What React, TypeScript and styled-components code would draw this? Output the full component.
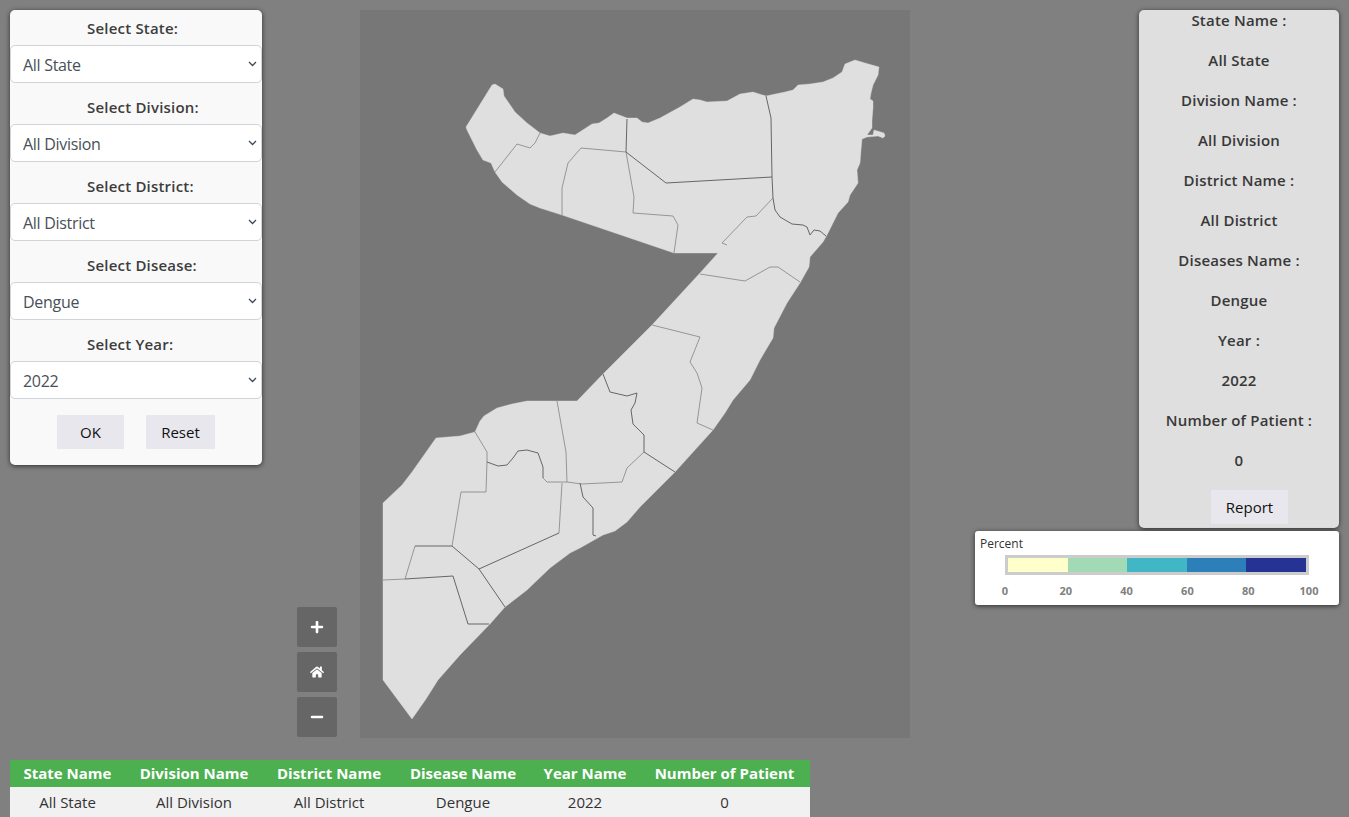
import React from "react";
import styled, { createGlobalStyle } from "styled-components";
import { FaHome, FaMinus, FaPlus } from "react-icons/fa";

const Global = createGlobalStyle`
  html, body { margin: 0; height: 817px; overflow: hidden; background: #808080; }
  body { font-family: "Open Sans", "Liberation Sans", sans-serif; }
  * { box-sizing: border-box; }
`;

const Page = styled.div`
  padding: 10px;
  height: 817px;
  overflow: hidden;
`;
const Top = styled.div`
  display: grid;
  grid-template-columns: 252px 1fr 364px;
  height: 728px;
`;
const FilterPanel = styled.form`
  height: 455px;
  background: #f9f9fa;
  border-radius: 5px;
  box-shadow: 0 1px 5px rgba(0, 0, 0, 0.65);
  display: flex;
  flex-direction: column;
`;
const FieldLabel = styled.label`
  display: block;
  height: 35px;
  padding: 8px 0 0 77px;
  font-size: 15px;
  line-height: 20px;
  font-weight: 600;
  letter-spacing: 0.2px;
  color: #3d3d3d;
`;
const Field = styled.div`
  height: 79px;
`;
const SelectWrap = styled.div`
  position: relative;
  height: 38px;
`;
const Select = styled.select`
  display: block;
  width: 100%;
  height: 38px;
  padding: 2px 24px 0 12px;
  appearance: none;
  font-family: inherit;
  font-size: 16px;
  letter-spacing: -0.3px;
  color: #495057;
  background: #fff;
  border: 1px solid #ced4da;
  border-radius: 5px;
`;
const Chevron = styled.svg`
  position: absolute;
  right: 5px;
  top: 16px;
  width: 9px;
  height: 6px;
  pointer-events: none;
`;
const Actions = styled.div`
  display: flex;
  margin-top: 10px;
  padding-left: 47px;
  gap: 22px;
`;
const Button = styled.button<{ $w: number }>`
  width: ${(p) => p.$w}px;
  height: 34px;
  padding: 0;
  border: 0;
  background: #e7e7ed;
  color: #111;
  font-family: inherit;
  font-size: 15px;
`;
const Stage = styled.div`
  display: flex;
  align-items: flex-end;
  gap: 23px;
  padding-left: 35px;
`;
const Zoom = styled.div`
  display: flex;
  flex-direction: column;
  gap: 5px;
  margin-bottom: 1px;
`;
const ZoomButton = styled.div`
  width: 40px;
  height: 40px;
  background: #666;
  border-radius: 2px;
  color: #fff;
  display: flex;
  align-items: center;
  justify-content: center;
  padding: 0 1px 1px 0;
  font-size: 14px;
`;
const MapBox = styled.svg`
  display: block;
  width: 550px;
  height: 728px;
  background: #777;
`;
const Side = styled.div`
  display: flex;
  flex-direction: column;
  align-items: flex-end;
  gap: 3px;
`;
const InfoPanel = styled.div`
  width: 200px;
  height: 518px;
  background: #dfdfdf;
  border-radius: 5px;
  box-shadow: 0 1px 5px rgba(0, 0, 0, 0.65);
  text-align: center;
`;
const InfoLine = styled.div`
  height: 40px;
  font-size: 15px;
  line-height: 20px;
  font-weight: 600;
  letter-spacing: 0.2px;
  color: #383838;
`;
const ReportRow = styled.div`
  display: flex;
  padding-left: 72px;
`;
const Legend = styled.div`
  width: 364px;
  height: 74px;
  background: #fff;
  border-radius: 3px;
  box-shadow: 0 1px 5px rgba(0, 0, 0, 0.65);
  padding: 6px 0 0 5px;
`;
const LegendTitle = styled.div`
  font-size: 12px;
  line-height: 14px;
  color: #333;
`;
const Ramp = styled.div`
  display: flex;
  width: 304px;
  height: 20px;
  margin: 4px 0 0 25px;
  border: 3px solid #ccc;
`;
const Swatch = styled.div<{ $c: string }>`
  flex: 1;
  background: ${(p) => p.$c};
`;
const Ticks = styled.div`
  display: flex;
  justify-content: space-between;
  width: 304px;
  margin: 8px 0 0 25px;
`;
const Tick = styled.span`
  width: 0;
  display: flex;
  justify-content: center;
  font-size: 11px;
  line-height: 15px;
  font-weight: 700;
  color: #808080;
`;
const Table = styled.table`
  margin-top: 22px;
  width: 800px;
  border-collapse: collapse;
  table-layout: fixed;
  text-align: center;
`;
const Th = styled.th<{ $w: number }>`
  width: ${(p) => p.$w}px;
  height: 27px;
  padding: 0 0 2px;
  background: #4caf50;
  color: #fff;
  font-size: 15px;
  font-weight: 700;
`;
const Td = styled.td`
  height: 30px;
  padding: 0;
  background: #f1f1f1;
  color: #333;
  font-size: 15px;
  border-bottom: 1px solid #ddd;
`;

const outline =
  "M466 127L479 106L492 85L495 84L503 89L504 96L515 112L527 123L540 133L550 136L563 133L575 135L592 124L599 123L607 118L614 113L627 118L637 118L642 122L648 123L660 118L680 107L693 99L700 100L707 102L727 101L740 94L753 92L766 96L785 92L793 90L798 85L810 84L823 82L833 78L842 72L845 64L855 60L865 63L879 67L878 75L873 85L871 93L870 99L873 101L873 108L872 120L872 128L867 135L873 135L874 130L884 133L885 136L883 138L878 136L867 137L862 139L861 150L860 163L857 170L858 183L850 195L848 202L838 213L832 225L827 235L823 242L810 257L809 267L800 283L787 303L774 328L773 338L760 360L750 380L733 400L725 413L713 430L675 472L657 490L640 507L627 522L615 531L603 535L580 548L570 553L550 568L527 590L505 607L490 624L460 655L438 680L426 699L412 719L383 680L383 580L383 503L402 485L412 472L436 438L460 436L475 432L480 421L484 416L497 408L512 404L527 401L557 401L577 401L603 374L652 325L700 273L718 253L674 253L562 215L540 208L530 204L517 195L502 182L495 172L491 163L483 160L477 150L472 140L467 130Z";

const strongLines = [
  "M627 119L626 152L666 183L772 177",
  "M766 96L771 118L772 177L773 198L775 210L780 217L792 224L803 225L807 227L810 235L814 230L820 231L826 236",
  "M603 374L610 392L627 396L637 393L635 403L631 410L633 424L644 435L644 452L675 472",
  "M580 483L583 497L593 508L593 535L596 536",
  "M452 546L479 569L559 533",
  "M415 546L452 546M405 579L453 576L468 624L489 624",
  "M479 569L505 607",
  "M543 478L543 467L538 453L527 450L518 451L513 458L507 465L498 466L487 462",
];
const softLines = [
  "M495 172L517 144L530 148L535 143L540 133",
  "M562 216L562 188L568 163L581 148L626 152",
  "M626 152L634 197L633 213L673 216L678 225L674 253",
  "M773 198L756 216L747 217L722 243L727 245",
  "M700 274L745 281L770 267L778 267L800 282",
  "M652 325L700 337L690 362L697 373L702 388L697 423L713 430",
  "M644 452L627 468L622 482L582 484L567 482L547 482L543 478",
  "M475 432L487 452L487 462L486 492L461 492L452 546",
  "M559 533L562 483",
  "M557 401L566 452L567 482",
  "M415 546L405 579L383 580",
];

const fields = [
  ["Select State:", "All State"],
  ["Select Division:", "All Division"],
  ["Select District:", "All District"],
  ["Select Disease:", "Dengue"],
  ["Select Year:", "2022"],
];
const info = [
  "State Name :",
  "All State",
  "Division Name :",
  "All Division",
  "District Name :",
  "All District",
  "Diseases Name :",
  "Dengue",
  "Year :",
  "2022",
  "Number of Patient :",
  "0",
];
const ramp = ["#ffffcc", "#a1dab4", "#41b6c4", "#2c7fb8", "#253494"];
const columns: [string, number, string][] = [
  ["State Name", 115, "All State"],
  ["Division Name", 138, "All Division"],
  ["District Name", 132, "All District"],
  ["Disease Name", 136, "Dengue"],
  ["Year Name", 108, "2022"],
  ["Number of Patient", 171, "0"],
];

export default function App() {
  return (
    <Page>
      <Global />
      <Top>
        <FilterPanel>
          {fields.map(([label, value]) => (
            <Field key={label}>
              <FieldLabel>{label}</FieldLabel>
              <SelectWrap>
                <Select defaultValue={value}>
                  <option>{value}</option>
                </Select>
                <Chevron viewBox="0 0 9 6">
                  <path d="M1 1L4.5 4.5L8 1" fill="none" stroke="#3f4a57" strokeWidth="1.3" />
                </Chevron>
              </SelectWrap>
            </Field>
          ))}
          <Actions>
            <Button type="button" $w={67}>OK</Button>
            <Button type="button" $w={69}>Reset</Button>
          </Actions>
        </FilterPanel>
        <Stage>
          <Zoom>
            <ZoomButton><FaPlus /></ZoomButton>
            <ZoomButton><FaHome /></ZoomButton>
            <ZoomButton><FaMinus /></ZoomButton>
          </Zoom>
          <MapBox viewBox="360 10 550 728">
            <path d={outline} fill="#dfdfdf" stroke="#dfdfdf" strokeWidth="0.4" strokeLinejoin="round" />
            {softLines.map((d) => (
              <path key={d} d={d} fill="none" stroke="#8d8d8d" strokeWidth="0.9" />
            ))}
            {strongLines.map((d) => (
              <path key={d} d={d} fill="none" stroke="#666" strokeWidth="1" />
            ))}
          </MapBox>
        </Stage>
        <Side>
          <InfoPanel>
            {info.map((t, i) => (
              <InfoLine key={i}>{t}</InfoLine>
            ))}
            <ReportRow>
              <Button type="button" $w={77}>Report</Button>
            </ReportRow>
          </InfoPanel>
          <Legend>
            <LegendTitle>Percent</LegendTitle>
            <Ramp>
              {ramp.map((c) => (
                <Swatch key={c} $c={c} />
              ))}
            </Ramp>
            <Ticks>
              {[0, 20, 40, 60, 80, 100].map((n) => (
                <Tick key={n}>{n}</Tick>
              ))}
            </Ticks>
          </Legend>
        </Side>
      </Top>
      <Table>
        <thead>
          <tr>
            {columns.map(([h, w]) => (
              <Th key={h} $w={w}>{h}</Th>
            ))}
          </tr>
        </thead>
        <tbody>
          <tr>
            {columns.map(([h, , v]) => (
              <Td key={h}>{v}</Td>
            ))}
          </tr>
        </tbody>
      </Table>
    </Page>
  );
}
